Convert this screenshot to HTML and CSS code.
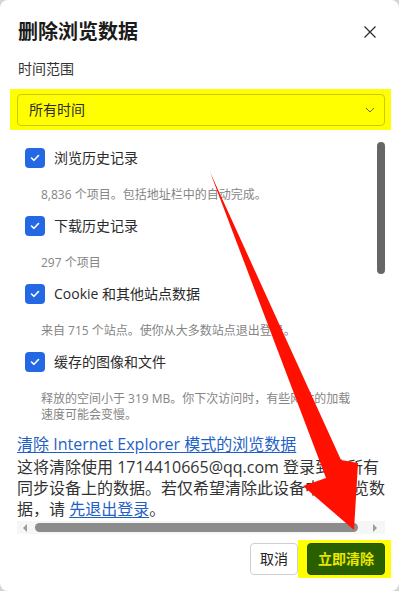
FILE: index.html
```html
<!DOCTYPE html>
<html lang="zh-CN">
<head>
<meta charset="utf-8">
<title>删除浏览数据</title>
<link rel="stylesheet" href="styles.css">
</head>
<body>
<div class="dialog">
  <div class="header">
    <h1 class="title">删除浏览数据</h1>
    <svg class="close" width="14" height="14" viewBox="0 0 14 14"><path d="M1.5 1.5 L12.5 12.5 M12.5 1.5 L1.5 12.5" stroke="#2b2b2b" stroke-width="1.2" fill="none"/></svg>
  </div>
  <div class="range-label">时间范围</div>
  <div class="hl hl-select">
    <div class="select">
      <span class="select-text">所有时间</span>
      <svg class="chev" width="10" height="6" viewBox="0 0 10 6"><path d="M1 1 L5 5 L9 1" stroke="#6b6b3a" stroke-width="1" fill="none"/></svg>
    </div>
  </div>
  <div class="scroll">
    <div class="items">
      <div class="item">
        <div class="row"><span class="cb"><svg width="10" height="8" viewBox="0 0 10 8"><path d="M1.5 4 L4 6.3 L8.5 1.5" stroke="#fff" stroke-width="1.6" fill="none" stroke-linecap="round" stroke-linejoin="round"/></svg></span><span class="label">浏览历史记录</span></div>
        <div class="desc">8,836 个项目。包括地址栏中的自动完成。</div>
      </div>
      <div class="item">
        <div class="row"><span class="cb"><svg width="10" height="8" viewBox="0 0 10 8"><path d="M1.5 4 L4 6.3 L8.5 1.5" stroke="#fff" stroke-width="1.6" fill="none" stroke-linecap="round" stroke-linejoin="round"/></svg></span><span class="label">下载历史记录</span></div>
        <div class="desc">297 个项目</div>
      </div>
      <div class="item">
        <div class="row"><span class="cb"><svg width="10" height="8" viewBox="0 0 10 8"><path d="M1.5 4 L4 6.3 L8.5 1.5" stroke="#fff" stroke-width="1.6" fill="none" stroke-linecap="round" stroke-linejoin="round"/></svg></span><span class="label">Cookie 和其他站点数据</span></div>
        <div class="desc">来自 715 个站点。使你从大多数站点退出登录。</div>
      </div>
      <div class="item">
        <div class="row"><span class="cb"><svg width="10" height="8" viewBox="0 0 10 8"><path d="M1.5 4 L4 6.3 L8.5 1.5" stroke="#fff" stroke-width="1.6" fill="none" stroke-linecap="round" stroke-linejoin="round"/></svg></span><span class="label">缓存的图像和文件</span></div>
        <div class="desc">释放的空间小于 319 MB。你下次访问时，有些网站的加载<br>速度可能会变慢。</div>
      </div>
    </div>
    <div class="vtrack"><div class="vthumb"></div></div>
  </div>
  <div class="ie">
    <a class="link ie-link" href="#">清除 Internet Explorer 模式的浏览数据</a>
    <p class="sync">这将清除使用 1714410665@qq.com 登录到的所有<br>同步设备上的数据。若仅希望清除此设备中的浏览数<br>据，请 <a class="link" href="#">先退出登录</a>。</p>
  </div>
  <div class="hbar">
    <span class="arrow-l"></span>
    <div class="hthumb"></div>
    <span class="arrow-r"></span>
  </div>
  <div class="footer">
    <button class="btn cancel">取消</button>
    <div class="hl hl-btn"><button class="btn primary">立即清除</button></div>
  </div>
  <svg class="annot" width="399" height="591" viewBox="0 0 399 591">
    <polygon points="210,172 341,460 358,463 354,530 303,486 326,478" fill="#ff1000"/>
  </svg>
</div>
</body>
</html>
```
FILE: styles.css
```css
html, body {
  margin: 0;
  padding: 0;
}
body {
  background: #d4d4d4;
  font-family: "Open Sans", "Noto Sans CJK SC", sans-serif;
  color: #333;
}
.dialog {
  position: relative;
  width: 399px;
  height: 591px;
  background: #fff;
  border-radius: 8px;
  overflow: hidden;
  box-sizing: border-box;
}
.header {
  display: flex;
  justify-content: space-between;
  align-items: center;
  padding: 20px 22px 0 18px;
}
.title {
  margin: 0;
  font-size: 20px;
  line-height: 24px;
  font-weight: 700;
  color: #1b1b1b;
}
.close {
  display: block;
}
.range-label {
  margin-top: 15px;
  padding-left: 18px;
  font-size: 14px;
  line-height: 20px;
  color: #333;
}
.hl {
  background: #ffff00;
  box-sizing: border-box;
}
.hl-select {
  margin: 10px 8px 0 10px;
  padding: 5px 6px 4px 7px;
}
.select {
  height: 32px;
  box-sizing: border-box;
  border: 1px solid #c9c900;
  border-radius: 4px;
  display: flex;
  align-items: center;
  justify-content: space-between;
  padding: 0 9px 0 11px;
}
.select-text {
  font-size: 14px;
  line-height: 20px;
  color: #2b2b2b;
}
.chev {
  display: block;
}
.scroll {
  margin-top: 6px;
  height: 290px;
  display: flex;
  padding-left: 18px;
  overflow: hidden;
}
.items {
  flex: 1;
  padding-top: 12px;
}
.item {
  margin-bottom: 13px;
}
.row {
  display: flex;
  align-items: center;
  height: 20px;
}
.cb {
  width: 20px;
  height: 20px;
  margin-left: 7px;
  border-radius: 4px;
  background: #2468e3;
  display: flex;
  align-items: center;
  justify-content: center;
}
.cb svg {
  display: block;
}
.label {
  margin-left: 9px;
  font-size: 14px;
  line-height: 20px;
  color: #2b2b2b;
}
.desc {
  margin-top: 19px;
  padding-left: 23px;
  font-size: 12px;
  line-height: 16px;
  color: #858585;
  white-space: nowrap;
}
.vtrack {
  width: 8px;
  margin-right: 14px;
}
.vthumb {
  margin-top: 6px;
  height: 132px;
  background: #666;
  border-radius: 4px;
}
.ie {
  margin-top: 8px;
  padding-left: 17px;
  white-space: nowrap;
}
.link {
  color: #1f5fc6;
  text-decoration: underline;
  text-underline-offset: 2px;
}
.ie-link {
  display: block;
  font-size: 16px;
  line-height: 21px;
}
.sync {
  margin: 2px 0 0 0;
  font-size: 16px;
  line-height: 21px;
  color: #333;
}
.hbar {
  margin: 1px 14px 0 17px;
  height: 13px;
  background: #f6f6f6;
  display: flex;
  align-items: center;
}
.arrow-l {
  margin-left: 6px;
  width: 0;
  height: 0;
  border-top: 4px solid transparent;
  border-bottom: 4px solid transparent;
  border-right: 4px solid #9a9a9a;
}
.hthumb {
  margin-left: 8px;
  width: 323px;
  height: 9px;
  border-radius: 5px;
  background: #8c8c8c;
}
.arrow-r {
  margin-left: 15px;
  width: 0;
  height: 0;
  border-top: 4px solid transparent;
  border-bottom: 4px solid transparent;
  border-left: 4px solid #9a9a9a;
}
.footer {
  margin-top: 6px;
  padding-right: 8px;
  display: flex;
  justify-content: flex-end;
  align-items: center;
}
.btn {
  height: 32px;
  box-sizing: border-box;
  border-radius: 4px;
  font-family: "Open Sans", "Noto Sans CJK SC", sans-serif;
  font-size: 14px;
  line-height: 20px;
  padding: 0;
  margin: 0;
}
.cancel {
  width: 48px;
  background: #fff;
  border: 1px solid #cfcfcf;
  color: #222;
}
.hl-btn {
  padding: 3px 6px 3px 9px;
}
.primary {
  display: block;
  width: 78px;
  background: #2a5f00;
  border: 1px solid #245200;
  color: #e8e800;
  font-weight: 700;
}
.annot {
  position: absolute;
  top: 0;
  left: 0;
  pointer-events: none;
}
```
